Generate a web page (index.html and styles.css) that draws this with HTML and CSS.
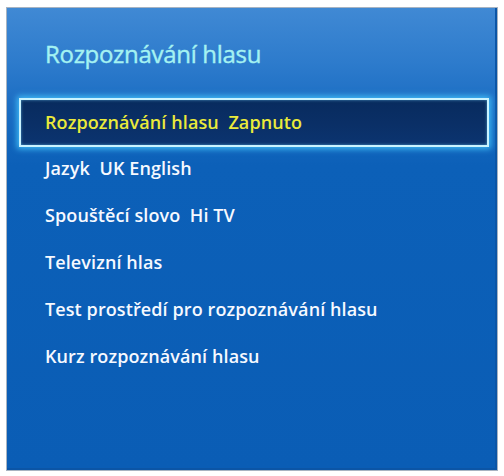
FILE: index.html
```html
<!DOCTYPE html>
<html lang="cs">
<head>
<meta charset="utf-8">
<link rel="stylesheet" href="styles.css">
</head>
<body>
<div class="panel">
  <div class="title">Rozpoznávání hlasu</div>
  <ul class="menu">
    <li class="item selected">Rozpoznávání hlasu&nbsp; Zapnuto</li>
    <li class="item">Jazyk&nbsp; UK English</li>
    <li class="item">Spouštěcí slovo&nbsp; Hi TV</li>
    <li class="item">Televizní hlas</li>
    <li class="item">Test prostředí pro rozpoznávání hlasu</li>
    <li class="item">Kurz rozpoznávání hlasu</li>
  </ul>
</div>
</body>
</html>
```
FILE: styles.css
```css
html, body {
  margin: 0;
  padding: 0;
  background: #ffffff;
}
body {
  width: 504px;
  height: 476px;
  padding-top: 7px;
  box-sizing: border-box;
}
.panel {
  margin-left: 6px;
  width: 492px;
  height: 464px;
  box-sizing: border-box;
  border: 1px solid #a7b3c1;
  background: linear-gradient(180deg, #4089d4 0%, #2d7bcc 12%, #1a6cc2 22%, #0c60b8 34%, #0a5db5 100%);
  box-shadow: inset -2px -2px 0 #0b55a6;
  font-family: "Open Sans", "Liberation Sans", sans-serif;
}
.title {
  padding: 31px 0 0 38px;
  height: 30px;
  line-height: 30px;
  font-size: 24px;
  font-weight: 400;
  color: #a4f2f2;
  letter-spacing: -0.3px;
  -webkit-text-stroke: 0.4px #a4f2f2;
}
.menu {
  list-style: none;
  margin: 29px 0 0 0;
  padding: 0;
}
.item {
  height: 47px;
  line-height: 47px;
  padding-left: 38px;
  font-size: 18px;
  font-weight: 600;
  color: #f6f9ff;
  letter-spacing: 0.1px;
}
.item.selected {
  height: 49px;
  line-height: 45px;
  box-sizing: border-box;
  margin: 0 8px -2px 12px;
  padding-left: 24px;
  border: 2px solid #c9f3ff;
  background: linear-gradient(180deg, #082b5e 0%, #0a2f66 50%, #0b3470 100%);
  box-shadow: 0 0 6px 2px rgba(70, 200, 255, 0.85), inset 0 0 3px rgba(120, 220, 255, 0.6);
  color: #eaea3a;
}
```
